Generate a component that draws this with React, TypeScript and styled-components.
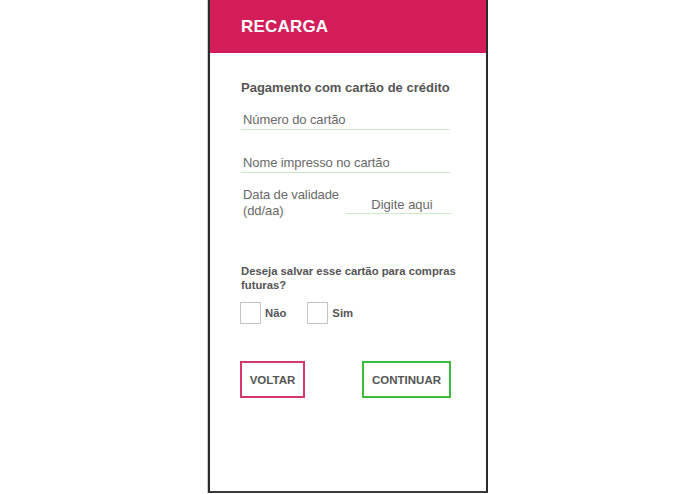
import React from "react";
import styled, { createGlobalStyle } from "styled-components";

const Global = createGlobalStyle`
  html, body { margin: 0; padding: 0; background: #fff; }
  body { font-family: "Liberation Sans", Arial, sans-serif; }
`;

const Page = styled.div`
  display: flex;
  justify-content: center;
  width: 695px;
  height: 494px;
`;

const Frame = styled.div`
  box-sizing: border-box;
  width: 280px;
  height: 493px;
  margin-left: 1px;
  border-left: 2px solid #2a2a2a;
  border-right: 2px solid #2a2a2a;
  border-bottom: 2px solid #3a3a3a;
  box-shadow: -1px 0 0 #c8c8c8;
  display: flex;
  flex-direction: column;
`;

const Header = styled.div`
  height: 53px;
  background: #d41d58;
  display: flex;
  align-items: center;
  padding-left: 31px;
  color: #fff;
  font-weight: bold;
  font-size: 17px;
  letter-spacing: 0.2px;
  box-sizing: border-box;
`;

const Body = styled.div`
  padding: 27px 20px 0 31px;
  display: flex;
  flex-direction: column;
  align-items: flex-start;
`;

const Title = styled.div`
  font-weight: bold;
  font-size: 13px;
  color: #555;
  margin-bottom: 17px;
`;

const Field = styled.div<{ $mb: number }>`
  border-bottom: 1.5px solid #cbe9c6;
  width: 209px;
  font-size: 13px;
  color: #6a6a6a;
  padding: 0 0 2px 2px;
  box-sizing: border-box;
  margin-bottom: ${(p) => p.$mb}px;
  letter-spacing: -0.1px;
`;

const DateRow = styled.div`
  display: flex;
  align-items: flex-end;
  margin-top: 1px;
`;

const DateLabel = styled.div`
  font-size: 13px;
  color: #6a6a6a;
  line-height: 16px;
  width: 103px;
  padding-left: 2px;
  letter-spacing: -0.1px;
`;

const DateField = styled.div`
  border-bottom: 1.5px solid #cbe9c6;
  width: 106px;
  font-size: 13px;
  color: #6a6a6a;
  text-align: center;
  padding-bottom: 1px;
  margin-bottom: 5px;
  padding-left: 6px;
  box-sizing: border-box;
`;

const Question = styled.div`
  margin-top: 45px;
  width: 224px;
  font-weight: bold;
  font-size: 11.3px;
  color: #555;
  line-height: 14px;
`;

const Options = styled.div`
  display: flex;
  gap: 21px;
  margin-top: 10px;
  margin-left: -1px;
`;

const Option = styled.label`
  display: flex;
  align-items: center;
  gap: 4px;
  font-weight: bold;
  font-size: 11.3px;
  color: #555;
`;

const Box = styled.span`
  display: inline-block;
  width: 19px;
  height: 20px;
  border: 1px solid #c4c4c4;
`;

const Buttons = styled.div`
  display: flex;
  justify-content: space-between;
  margin-top: 37px;
  margin-left: -1px;
  width: 211px;
`;

const Button = styled.div<{ $color: string; $w: number }>`
  box-sizing: border-box;
  width: ${(p) => p.$w}px;
  height: 37px;
  border: 2px solid ${(p) => p.$color};
  display: flex;
  align-items: center;
  justify-content: center;
  font-weight: bold;
  font-size: 11.5px;
  color: #555;
`;

export default function App() {
  return (
    <>
      <Global />
      <Page>
        <Frame>
          <Header>RECARGA</Header>
          <Body>
            <Title>Pagamento com cartão de crédito</Title>
            <Field $mb={25}>Número do cartão</Field>
            <Field $mb={13}>Nome impresso no cartão</Field>
            <DateRow>
              <DateLabel>
                Data de validade
                <br />
                (dd/aa)
              </DateLabel>
              <DateField>Digite aqui</DateField>
            </DateRow>
            <Question>Deseja salvar esse cartão para compras futuras?</Question>
            <Options>
              <Option>
                <Box />
                Não
              </Option>
              <Option>
                <Box />
                Sim
              </Option>
            </Options>
            <Buttons>
              <Button $color="#d6386a" $w={65}>VOLTAR</Button>
              <Button $color="#3dbb3d" $w={89}>CONTINUAR</Button>
            </Buttons>
          </Body>
        </Frame>
      </Page>
    </>
  );
}
